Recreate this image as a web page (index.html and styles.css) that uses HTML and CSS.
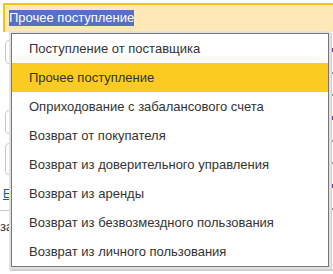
FILE: index.html
```html
<!DOCTYPE html>
<html lang="ru">
<head>
<meta charset="utf-8">
<link rel="stylesheet" href="styles.css">
</head>
<body>
<div class="page">
  <div class="field-active"><span class="sel">Прочее поступление</span></div>
  <div class="form">
    <div class="box b1"></div>
    <div class="box b2"></div>
    <div class="box b3"></div>
    <a class="link">Е</a>
    <div class="rule"></div>
    <div class="label">за</div>
  </div>
  <div class="side">
    <i class="mk mk-a"></i>
    <i class="mk mk-g"></i>
    <i class="mk mk-g"></i>
    <i class="mk mk-a"></i>
    <i class="mk mk-g"></i>
    <i class="mk mk-g"></i>
    <i class="mk mk-a"></i>
    <i class="mk mk-g"></i>
  </div>
  <div class="bars"><span class="bar w1"></span><span class="bar w2"></span><span class="bar w3"></span></div>
  <ul class="popup">
    <li class="item">Поступление от поставщика</li>
    <li class="item active">Прочее поступление</li>
    <li class="item">Оприходование с забалансового счета</li>
    <li class="item">Возврат от покупателя</li>
    <li class="item">Возврат из доверительного управления</li>
    <li class="item">Возврат из аренды</li>
    <li class="item">Возврат из безвозмездного пользования</li>
    <li class="item">Возврат из личного пользования</li>
  </ul>
</div>
</body>
</html>
```
FILE: styles.css
```css
html, body {
  margin: 0;
  padding: 0;
  background: #ffffff;
}
body {
  font-family: "Liberation Sans", Arial, sans-serif;
  font-size: 13px;
  color: #333333;
  overflow: hidden;
}
.page {
  position: relative;
  width: 333px;
  height: 274px;
  overflow: hidden;
}
.field-active {
  margin: 3px 0 0 3px;
  border: 2px solid #f6c416;
  border-right: none;
  border-bottom: none;
  background: #ffe8b7;
  padding: 5px 0 0 4px;
  box-sizing: border-box;
  height: 29px;
}
.sel {
  display: inline-block;
  height: 16px;
  line-height: 16px;
  background: #5570c6;
  color: #ffffff;
  vertical-align: top;
}
.form {
  display: flex;
  flex-direction: column;
  align-items: flex-start;
  padding: 8px 0 0 5px;
}
.box {
  width: 40px;
  border: 1px solid #c8c8c8;
  border-radius: 4px;
}
.b1 { height: 22px; }
.b2 { height: 22px; margin-top: 46px; }
.b3 { height: 30px; margin-top: 9px; }
.link {
  margin: 12px 0 0 -2px;
  color: #1a56c8;
  text-decoration: underline;
  font-size: 12px;
  line-height: 14px;
}
.rule {
  margin: 9px 0 0 -5px;
  width: 40px;
  height: 1px;
  background: #c8c8c8;
}
.label {
  margin: 8px 0 0 -5px;
  font-size: 13px;
  line-height: 15px;
  color: #333;
}
.side {
  position: absolute;
  left: 330px;
  top: 48px;
  display: flex;
  flex-direction: column;
  gap: 20px;
}
.mk {
  display: block;
  width: 3px;
  height: 2px;
  background: #9a9a9a;
}
.mk-a {
  height: 4px;
  background: #6a3fa0;
}
.bars {
  position: absolute;
  left: 0;
  top: 269px;
  display: flex;
  gap: 10px;
  padding-left: 10px;
}
.bar {
  height: 2px;
  background: #c4c4c4;
}
.w1 { width: 56px; }
.w2 { width: 92px; margin-left: 12px; }
.w3 { width: 150px; }
.popup {
  position: absolute;
  left: 11px;
  top: 33px;
  width: 318px;
  margin: 0;
  padding: 0;
  list-style: none;
  background: #ffffff;
  border: 1px solid #767676;
  box-sizing: border-box;
  box-shadow: 0 0 0 2px #e2e2e2, 1px 2px 0 2px #d0d0d0;
}
.item {
  height: 29px;
  line-height: 29px;
  padding-left: 17px;
  white-space: nowrap;
  color: #333333;
}
.active {
  background: #fbcb22;
}
```
